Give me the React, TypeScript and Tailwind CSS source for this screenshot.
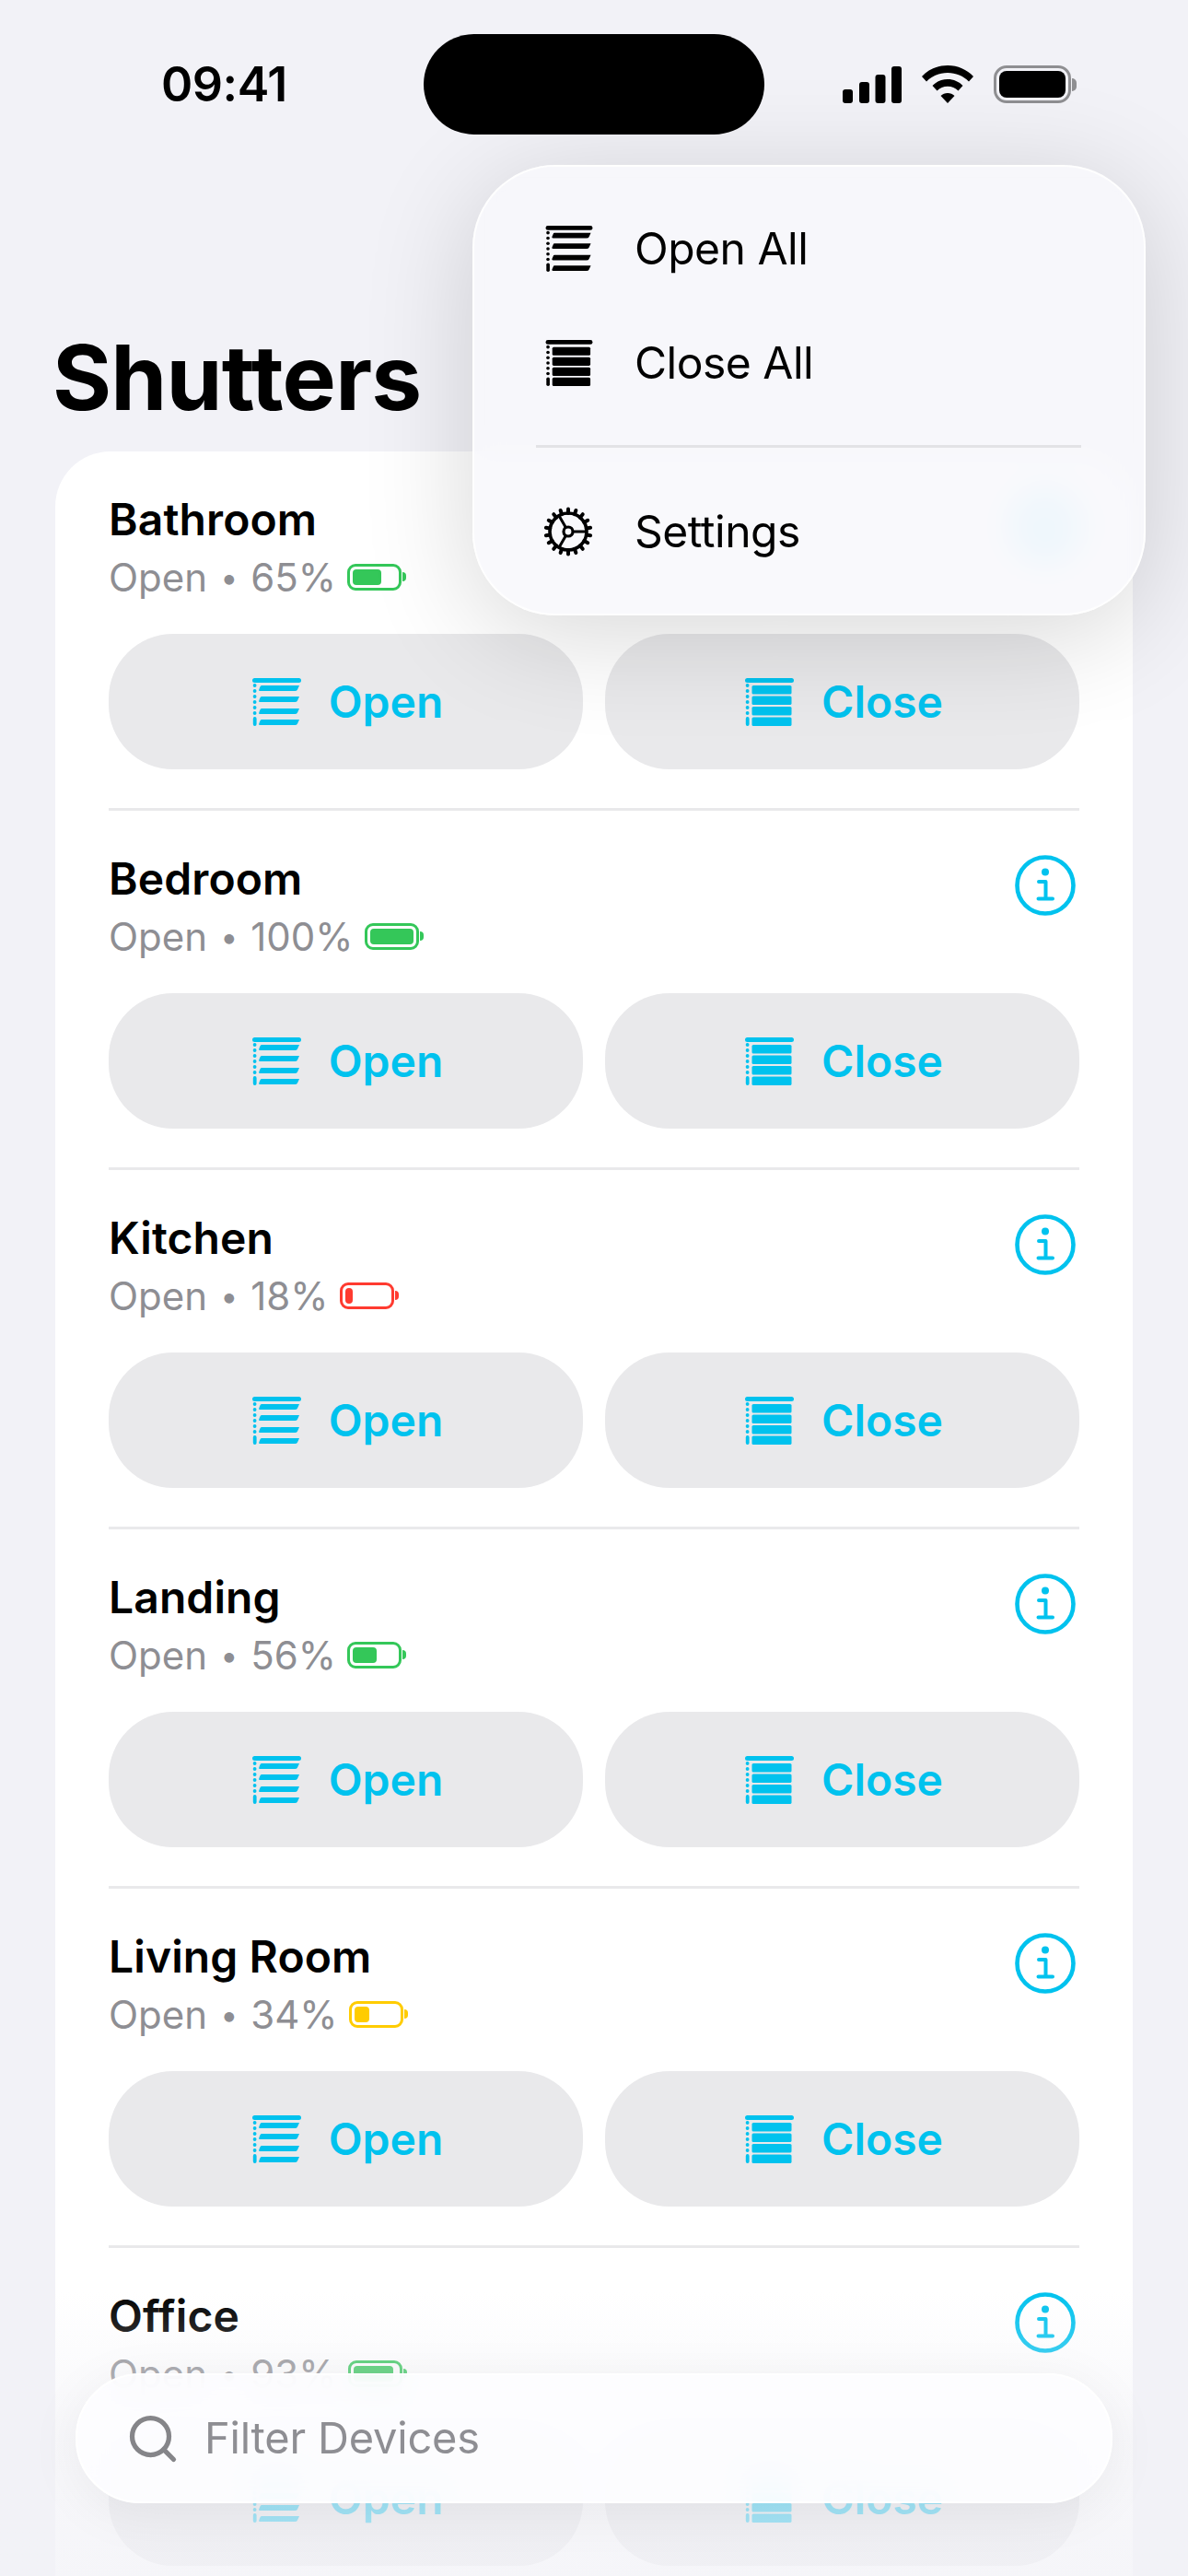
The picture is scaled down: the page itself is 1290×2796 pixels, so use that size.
import { Search } from 'lucide-react';

const rows = [
  { name: 'Bathroom', level: 65, color: '#34c759' },
  { name: 'Bedroom', level: 100, color: '#34c759' },
  { name: 'Kitchen', level: 18, color: '#ff3b30' },
  { name: 'Landing', level: 56, color: '#34c759' },
  { name: 'Living Room', level: 34, color: '#ffcc00' },
  { name: 'Office', level: 93, color: '#34c759' },
];

function BlindRail() {
  return (
    <>
      <rect x="0" y="0" width="53" height="5" rx="2.5" />
      {[8, 14, 20, 26, 32, 38].map((y) => (
        <circle key={y} cx="2.6" cy={y} r="1.9" />
      ))}
      <rect x="0.8" y="42" width="3.8" height="10" rx="1.9" />
    </>
  );
}

function OpenIcon({ className }: { className: string }) {
  return (
    <svg viewBox="0 0 53 52" fill="currentColor" className={className}>
      <BlindRail />
      {[8, 20, 33, 45].map((y) => (
        <path key={y} d={`M10 ${y}H51L49 ${y + 4.4}Q48.4 ${y + 6} 46 ${y + 6}H8.5Q6.5 ${y + 6} 7.4 ${y + 4}L8.4 ${y + 1.5}Q8.8 ${y} 10 ${y}Z`} />
      ))}
    </svg>
  );
}

function CloseIcon({ className }: { className: string }) {
  return (
    <svg viewBox="0 0 53 52" fill="currentColor" className={className}>
      <BlindRail />
      {[8, 19.5, 31, 42.5].map((y) => (
        <rect key={y} x="7.5" y={y} width="43" height="9.5" rx="1.6" />
      ))}
    </svg>
  );
}

function InfoIcon() {
  return (
    <svg viewBox="0 0 66 66" fill="none" stroke="currentColor" className="w-[66px] h-[66px] text-[#00c2ee]">
      <circle cx="33" cy="33" r="30.5" strokeWidth="4.6" />
      <circle cx="33" cy="18.5" r="4" fill="currentColor" stroke="none" />
      <path d="M26 29H33.5V47M25.5 47.5H41" strokeWidth="4" strokeLinecap="round" strokeLinejoin="round" />
    </svg>
  );
}

function GearIcon() {
  const teeth = Array.from({ length: 18 }, (_, i) => i * 20);
  return (
    <svg viewBox="0 0 54 54" fill="none" stroke="currentColor" className="w-[54px] h-[54px] text-black">
      <circle cx="27" cy="27" r="20" strokeWidth="3.6" />
      {teeth.map((deg) => (
        <path key={deg} d="M27 2.500V7" strokeWidth="4" strokeLinecap="round" transform={`rotate(${deg} 27 27)`} />
      ))}
      <circle cx="27" cy="27" r="5" strokeWidth="3.2" />
      <path d="M32 27H47M24.500 22.700L17 9.700M24.500 31.300L17 44.300" strokeWidth="3" />
    </svg>
  );
}

function Battery({ level, color }: { level: number; color: string }) {
  return (
    <div className="flex items-center ml-[12px]">
      <div className="w-[59px] h-[29px] rounded-[9px] border-[3px] p-[3px]" style={{ borderColor: color }}>
        <div className="h-full rounded-[4px]" style={{ width: `${level}%`, backgroundColor: color }} />
      </div>
      <div className="w-[4px] h-[10px] ml-[1px] rounded-r-full" style={{ backgroundColor: color }} />
    </div>
  );
}

function StatusIcons() {
  return (
    <div className="flex items-center gap-[22px] ml-[85px]">
      <svg viewBox="0 0 64 40" fill="currentColor" className="w-[64px] h-[40px] text-black">
        <rect x="0" y="25" width="11" height="15" rx="3" />
        <rect x="18" y="17" width="11" height="23" rx="3" />
        <rect x="35.500" y="9" width="11" height="31" rx="3" />
        <rect x="53" y="0" width="11" height="40" rx="3" />
      </svg>
      <svg viewBox="0 0 56 41" className="w-[56px] h-[41px] text-black" fill="currentColor">
        <path d="M28 0C39 0 49 4.500 56 12L51 17.500C45 11.500 37 8 28 8S11 11.500 5 17.500L0 12C7 4.500 17 0 28 0Z" />
        <path d="M28 15C34.500 15 40.500 17.700 44.500 22L39.500 27.500C36.500 24.500 32.500 22.700 28 22.700S19.500 24.500 16.500 27.500L11.500 22C15.500 17.700 21.500 15 28 15Z" />
        <path d="M28 30C30.800 30 33.500 31 35.500 33L28 41L20.500 33C22.500 31 25.200 30 28 30Z" />
      </svg>
      <div className="flex items-center">
        <div className="w-[84px] h-[41px] rounded-[14px] border-[3px] border-[#8f8f92] p-[3px]">
          <div className="w-full h-full rounded-[8px] bg-black" />
        </div>
        <div className="w-[5px] h-[14px] ml-[1px] rounded-r-full bg-[#8f8f92]" />
      </div>
    </div>
  );
}

function Row({ name, level, color, last }: { name: string; level: number; color: string; last: boolean }) {
  return (
    <div className={`h-[390px] pt-[44px] ${last ? '' : 'border-b-[3px] border-[#e9e9eb]'}`}>
      <div className="flex justify-between h-[118px]">
        <div>
          <div className="text-[48px] leading-[60px] font-semibold text-black tracking-[0.1px]">{name}</div>
          <div className="flex items-center h-[52px] mt-[6px] text-[42px] text-[#8e8e93]">
            <span>Open</span>
            <span className="mx-[14px] text-[34px]">•</span>
            <span>{level}%</span>
            <Battery level={level} color={color} />
          </div>
        </div>
        <div className="pr-[4px] pt-[4px]">
          <InfoIcon />
        </div>
      </div>
      <div className="grid grid-cols-2 gap-[24px] mt-[36px]">
        <div className="h-[147px] rounded-[70px] bg-[#e9e9eb] flex items-center justify-center gap-[30px] pl-[4px] text-[#00c2ee] text-[48px] font-semibold">
          <OpenIcon className="w-[53px] h-[52px]" />
          <span>Open</span>
        </div>
        <div className="h-[147px] rounded-[70px] bg-[#e9e9eb] flex items-center justify-center gap-[30px] pl-[4px] text-[#00c2ee] text-[48px] font-semibold">
          <CloseIcon className="w-[53px] h-[52px]" />
          <span>Close</span>
        </div>
      </div>
    </div>
  );
}

export default function App() {
  return (
    <div className="relative w-[1290px] h-[2796px] overflow-hidden bg-[#f2f2f7] font-['Inter',sans-serif]">
      {/* Status bar */}
      <div className="flex items-center pt-[37px] h-[146px] pl-[175px]">
        <div className="w-[285px] text-[52px] font-semibold text-black tracking-[-0.5px]">09:41</div>
        <div className="w-[370px] h-[109px] rounded-[55px] bg-black" />
        <StatusIcons />
      </div>

      {/* Title */}
      <div className="mt-[206px] pl-[57px] text-[98px] leading-[116px] font-bold text-black tracking-[-0.8px]">Shutters</div>

      {/* Device list */}
      <div className="mx-[60px] mt-[22px] bg-white rounded-t-[60px] px-[58px]">
        {rows.map((row, index) => (
          <Row key={row.name} {...row} last={index === rows.length - 1} />
        ))}
      </div>

      {/* Bottom fade */}
      <div className="absolute left-0 right-0 bottom-0 h-[310px] bg-gradient-to-b from-[#f2f2f7]/0 via-[#f2f2f7]/55 to-[#f2f2f7]/75" />

      {/* Filter bar */}
      <div className="absolute left-[82px] top-[2576px] w-[1126px] h-[141px] rounded-[70px] bg-[#fdfdff]/90 backdrop-blur-lg border-2 border-white shadow-[0_10px_60px_rgba(0,0,0,0.06)] flex items-center pl-[52px] gap-[26px] text-[47px] tracking-[-0.2px] text-[#8e8e93]">
        <Search size={60} strokeWidth={2.1} className="text-[#858589]" />
        <span>Filter Devices</span>
      </div>

      {/* Menu */}
      <div className="absolute left-[513px] top-[179px] w-[731px] h-[489px] rounded-[90px] bg-[#f8f8fb]/80 backdrop-blur-[18px] border-2 border-white/80 shadow-[0_20px_120px_rgba(0,0,0,0.16)] pl-[75px] pr-[68px] pt-[27px] text-[48px] tracking-[-0.5px] text-black">
        <div className="flex items-center gap-[45px] h-[124px] pl-[2px]">
          <OpenIcon className="w-[52px] h-[50px]" />
          <span>Open All</span>
        </div>
        <div className="flex items-center gap-[45px] h-[124px] pl-[2px]">
          <CloseIcon className="w-[52px] h-[50px]" />
          <span>Close All</span>
        </div>
        <div className="h-[3px] mt-[27px] -ml-[8px] bg-[#e3e3e6]" />
        <div className="flex items-center gap-[45px] h-[120px] mt-[31px]">
          <GearIcon />
          <span>Settings</span>
        </div>
      </div>
    </div>
  );
}
